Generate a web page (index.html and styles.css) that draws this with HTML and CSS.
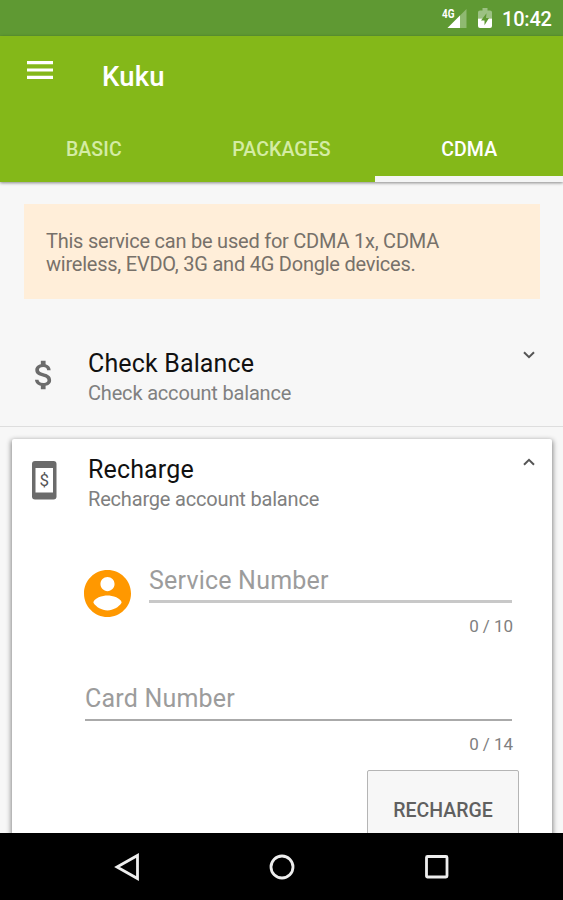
FILE: index.html
```html
<!DOCTYPE html>
<html lang="en">
<head>
<meta charset="utf-8">
<title>Kuku</title>
<link rel="stylesheet" href="styles.css">
</head>
<body>
<div class="screen">
  <div class="status">
    <svg class="signal" width="28" height="24" viewBox="0 0 28 24">
      <path d="M26.500 2V21H7.500Z" fill="#8fb971"/>
      <path d="M20 8.500V21H7.500Z" fill="#fff"/>
      <text class="net" x="2" y="10.500" textLength="12.500" lengthAdjust="spacingAndGlyphs">4G</text>
    </svg>
    <svg class="battery" width="14" height="20" viewBox="0 0 14 21" preserveAspectRatio="none">
      <path d="M4.500 0h5v2.500H12a2 2 0 0 1 2 2V11H0V4.500a2 2 0 0 1 2-2h2.500z" fill="#9cc183"/>
      <path d="M0 11h14v8a2 2 0 0 1-2 2H2a2 2 0 0 1-2-2z" fill="#fff"/>
      <path d="M8.500 5.500L3 13h3.500v5L11 10.500H8z" fill="#5f9933"/>
    </svg>
    <span class="clock">10:42</span>
  </div>
  <header class="appbar">
    <div class="toolbar">
      <svg class="menu" width="26" height="18" viewBox="0 0 26 18" fill="#fff"><path d="M0 0h26v3.200H0zM0 7.400h26v3.200H0zM0 14.800h26V18H0z"/></svg>
      <h1 class="title">Kuku</h1>
    </div>
    <nav class="tabs">
      <a class="tab">BASIC</a>
      <a class="tab">PACKAGES</a>
      <a class="tab active">CDMA</a>
    </nav>
  </header>
  <main class="content">
    <p class="notice">This service can be used for CDMA 1x, CDMA wireless, EVDO, 3G and 4G Dongle devices.</p>
    <section class="item">
      <svg class="item-icon" width="38" height="38" viewBox="0 0 24 24" fill="#6b6b6b"><path d="M11.800 10.900c-2.270-.59-3-1.200-3-2.150 0-1.090 1.010-1.850 2.700-1.850 1.780 0 2.440.85 2.500 2.100h2.210c-.07-1.720-1.120-3.300-3.210-3.810V3h-3v2.160c-1.940.42-3.500 1.680-3.500 3.610 0 2.310 1.910 3.460 4.700 4.130 2.500.6 3 1.480 3 2.410 0 .69-.49 1.790-2.700 1.790-2.060 0-2.870-.92-2.980-2.100h-2.200c.12 2.190 1.760 3.420 3.680 3.830V21h3v-2.150c1.950-.37 3.500-1.500 3.500-3.550 0-2.840-2.430-3.810-4.700-4.400z"/></svg>
      <div class="labels">
        <h2 class="name">Check Balance</h2>
        <p class="desc">Check account balance</p>
      </div>
      <svg class="chevron" width="14" height="8" viewBox="0 0 14 8"><path d="M2 1.200L7 6.200L12 1.200"/></svg>
    </section>
    <section class="card">
      <div class="item card-head">
        <svg class="item-icon" width="38" height="40" viewBox="0 0 38 40">
          <rect x="8" y="1" width="24.500" height="38.500" rx="3" fill="#6b6b6b"/>
          <rect x="11.500" y="8" width="17.500" height="24.500" fill="#fff"/>
          <text class="phone-sign" x="20.200" y="26" text-anchor="middle">$</text>
        </svg>
        <div class="labels">
          <h2 class="name">Recharge</h2>
          <p class="desc">Recharge account balance</p>
        </div>
        <svg class="chevron" width="14" height="8" viewBox="0 0 14 8"><path d="M2 6.800L7 1.800L12 6.800"/></svg>
      </div>
      <form class="form">
        <div class="service">
          <svg class="avatar" width="47" height="47" viewBox="2 2 20 20"><path fill="#ff9800" d="M12 2C6.480 2 2 6.480 2 12s4.480 10 10 10 10-4.480 10-10S17.520 2 12 2zm0 3c1.660 0 3 1.340 3 3s-1.340 3-3 3-3-1.340-3-3 1.340-3 3-3zm0 14.200c-2.500 0-4.710-1.280-6-3.220.03-1.990 4-3.080 6-3.080 1.990 0 5.970 1.090 6 3.080-1.290 1.940-3.500 3.220-6 3.220z"/></svg>
          <div class="field">
            <div class="hint thick">Service Number</div>
            <div class="count">0 / 10</div>
          </div>
        </div>
        <div class="field">
          <div class="hint">Card Number</div>
          <div class="count">0 / 14</div>
        </div>
        <button class="button" type="button">RECHARGE</button>
      </form>
    </section>
  </main>
  <footer class="navbar">
    <svg width="26" height="28" viewBox="0 0 26 28"><path d="M23.500 2.500V25.500L3 14Z"/></svg>
    <svg width="26" height="28" viewBox="0 0 26 28"><circle cx="13" cy="14" r="11"/></svg>
    <svg width="26" height="28" viewBox="0 0 26 28"><rect x="2.500" y="3.500" width="20.500" height="20.500" rx="1"/></svg>
  </footer>
</div>
</body>
</html>
```

FILE: styles.css
```css
* { box-sizing: border-box; }
body, h1, h2, p { margin: 0; font-weight: 400; }
body { font-family: Roboto, sans-serif; background: #f7f7f7; }
svg { display: block; flex: none; }
.screen { width: 563px; height: 900px; display: flex; flex-direction: column; overflow: hidden; }

.status { flex: none; height: 36px; background: #5f9933; display: flex; align-items: flex-start; justify-content: flex-end; padding-right: 12px; }
.signal { margin: 7px 10px 0 0; }
.net { font: 700 12px Roboto, sans-serif; fill: #fff; }
.battery { margin: 8px 10px 0 0; }
.clock { font-size: 20px; font-weight: 500; line-height: 24px; margin-top: 7px; color: #fff; width: 49px; white-space: nowrap; letter-spacing: -0.2px; }

.appbar { flex: none; height: 146px; background: #84b819; display: flex; flex-direction: column; position: relative; z-index: 1; box-shadow: 0 1px 3px rgba(0,0,0,.45); }
.toolbar { height: 82px; display: flex; align-items: flex-start; padding-left: 27px; }
.menu { margin-top: 25px; }
.title { color: #fff; font-size: 27.500px; font-weight: 500; line-height: 32px; margin: 25px 0 0 49px; letter-spacing: .2px; }
.tabs { flex: 1; display: grid; grid-template-columns: repeat(3, 1fr); }
.tab { color: #d4eca4; font-size: 19.500px; font-weight: 500; line-height: 24px; text-align: center; padding-top: 20px; letter-spacing: .1px; }
.tab.active { color: #fff; border-bottom: 6px solid #f4f5f5; }

.content { flex: 1; min-height: 0; overflow: hidden; padding-top: 22px; }
.notice { margin: 0 23px 0 24px; height: 95px; padding: 26px 60px 0 22px; background: #ffeed9; color: #77716a; font-size: 20px; letter-spacing: -0.23px; line-height: 23px; }
.item { display: flex; align-items: flex-start; height: 106px; margin-top: 22px; padding: 26px 27px 0 24px; }
.content > .item { border-bottom: 1px solid #dedede; }
.content > .item .item-icon { margin: 9px -1px 0 1px; }
.labels { flex: 1; margin-left: 26px; }
.name { color: #111; font-size: 25px; letter-spacing: .15px; line-height: 32px; padding-top: 1px; }
.desc { color: #808080; font-size: 20px; letter-spacing: -0.18px; line-height: 24px; margin-top: 1px; }
.chevron { margin: 4px 0 0; fill: none; stroke: #555; stroke-width: 2; }

.card { margin: 12px 11px 0 12px; height: 480px; background: #fff; border-radius: 2px; box-shadow: 0 2px 5px 1px rgba(0,0,0,.45); }
.card-head { margin-top: 0; height: 107px; padding: 14px 16px 0 12px; }
.card-head .item-icon { margin-top: 7px; }
.card-head .chevron { margin-top: 5px; }
.phone-sign { font: 17px Roboto, sans-serif; fill: #555; }

.form { padding: 16px 40px 0 73px; }
.service { display: flex; align-items: flex-start; margin-left: -1px; height: 118px; }
.avatar { margin: 8px 18px 0 0; }
.field { flex: 1; }
.hint { color: #9c9c9c; font-size: 25px; letter-spacing: .2px; line-height: 32px; height: 41px; padding-top: 3px; border-bottom: 2px solid #aaa; }
.hint.thick { border-bottom: 3px solid #c8c8c8; }
.count { color: #808080; font-size: 17px; line-height: 20px; margin: 13px -1px 0 0; text-align: right; letter-spacing: -.05px; }
.button { display: block; width: 152px; height: 80px; margin: 16px -7px 0 auto; padding: 0; border: 1px solid #b5b5b5; border-radius: 2px; background: #f7f7f7; color: #606060; font: 500 19.500px Roboto, sans-serif; text-align: center; }

.navbar { flex: none; height: 67px; background: #000; position: relative; z-index: 1; display: flex; justify-content: center; gap: 129px; padding-top: 20px; }
.navbar svg { fill: none; stroke: #eee; stroke-width: 2.800; }
```
